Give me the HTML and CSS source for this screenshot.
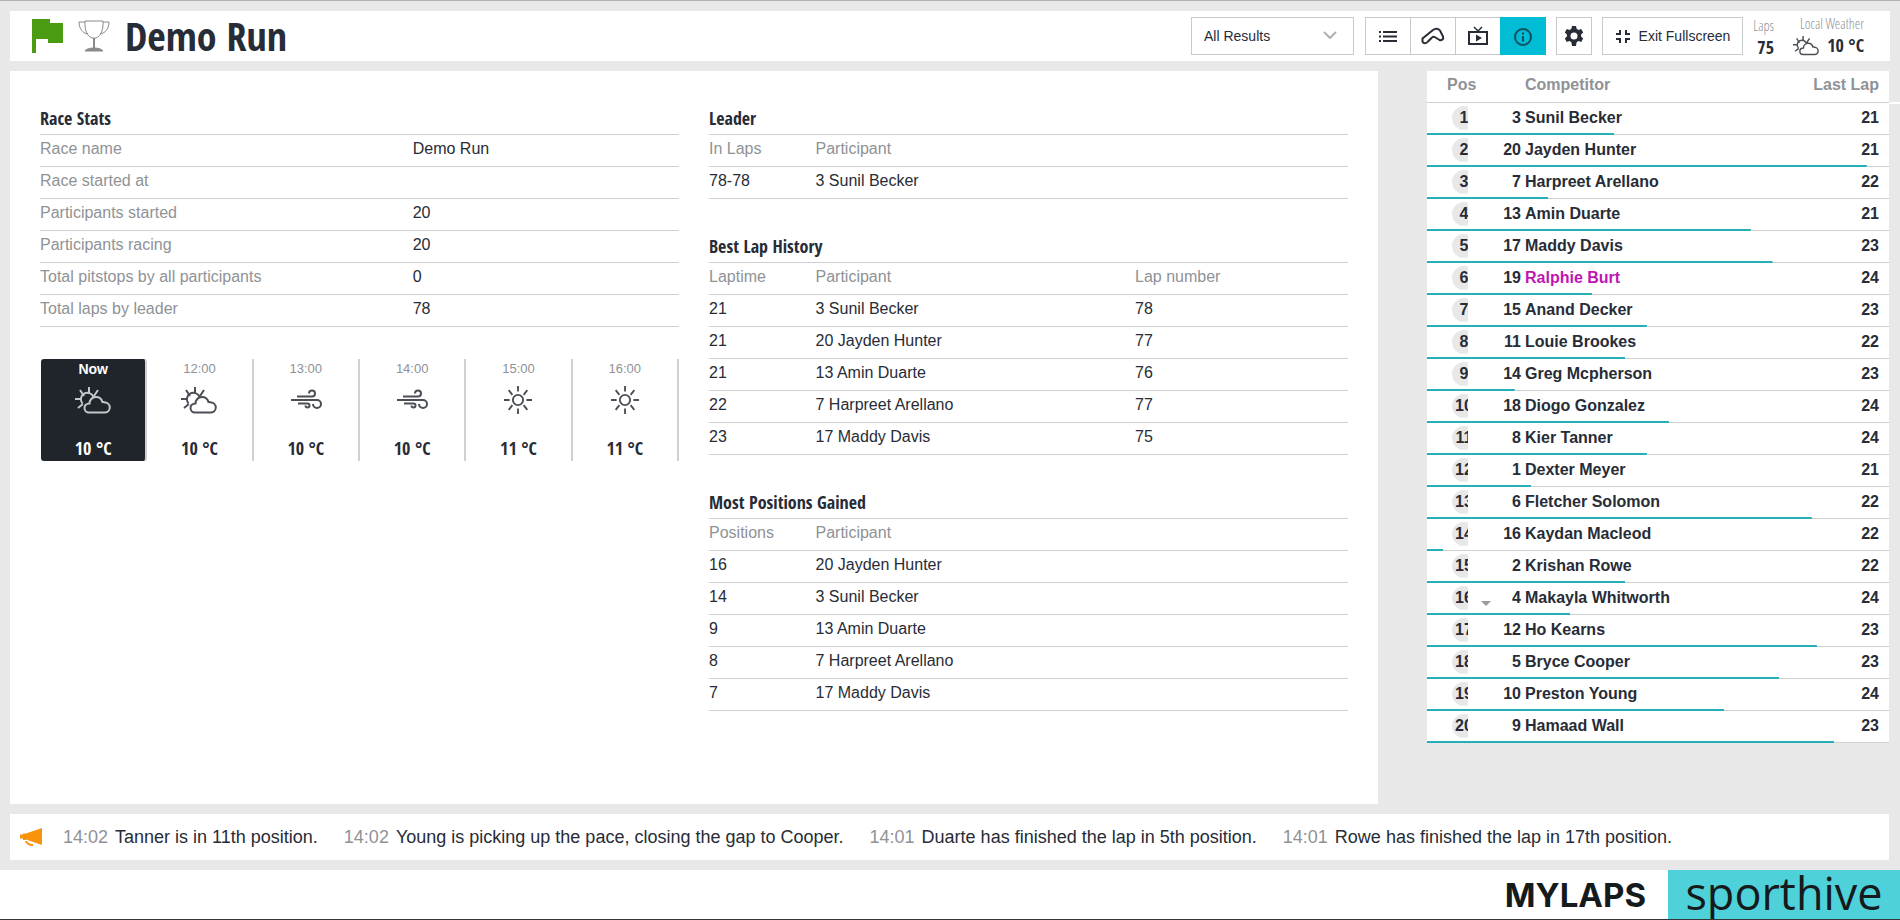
FILE: index.html
```html
<!DOCTYPE html>
<html lang="en">
<head>
    <meta charset="UTF-8">
    <meta name="viewport" content="width=device-width, initial-scale=1.0">
    <title>Demo Run</title>
    <link rel="stylesheet" href="styles.css">
</head>
<body>
    <!-- shared icons -->
    <svg class="sprite" aria-hidden="true">
        <symbol id="partly" viewBox="0 0 36 28">
            <path d="M14 1v6M5 4l4 6M23 4l-4 6M0 13h6M3 22l5-4M7.500 17.500a6.500 6.500 0 1 1 11-6.500M13 26.500h16.500a5 5 0 0 0 .5-10 3 3 0 0 0-2.500-.5c-1-3.500-3.500-5-6.500-5-4 0-6.500 3-6.500 6.500-3 0-5 2-5 4.500s2 4.500 4.500 4.500z"/>
        </symbol>
        <symbol id="wind" viewBox="-3 -4 36 28">
            <path d="M6 6.500h15a3 3 0 1 0-3-3M0 10h26a4 4 0 1 1-4 4M7 13.500h9.500a2 2 0 1 1-2 2"/>
        </symbol>
        <symbol id="sun" viewBox="-3 0 36 30">
            <circle cx="15" cy="15" r="5.500"/>
            <path d="M15 0v6M15 24v6M0 15h6M24 15h6M5 4.500l4 5M25 4.500l-4 5M5 25.500l4-5M25 25.500l-4-5"/>
        </symbol>
    </svg>

    <header class="topbar">
        <svg class="flag" viewBox="0 0 32 34" aria-label="Green flag"><path d="M0 0h18v4h13v20H16v-4H4v14H0z"/></svg>
        <svg class="trophy" viewBox="0 0 32 32" aria-label="Trophy">
            <path d="M7 1h18c.5 9-2 15-7 17h-4C9 16 6.500 10 7 1zM7 2H1c0 6 3 11 9 12M25 2h6c0 6-3 11-9 12"/>
            <path d="M16 18v10" stroke-width="2"/>
            <path class="base" d="M7 31c1-2 5-3 9-3s8 1 9 3z"/>
        </svg>
        <h1>Demo Run</h1>

        <div class="results">
            <select aria-label="Results filter">
                <option>All Results</option>
            </select>
            <svg viewBox="0 0 14 8"><path d="M1 1l6 6 6-6"/></svg>
        </div>
        <div class="views">
            <button type="button" aria-label="List">
                <svg viewBox="0 0 24 20"><path d="M7 6h14M7 10.500h14M7 15h14M3 6h2M3 10.500h2M3 15h2"/></svg>
            </button>
            <button type="button" aria-label="Track">
                <svg viewBox="0 -1 24 20"><path d="M1.500 14.500v-3L12 3c2.500-2 5.500-1.500 7 .5l3 6c1 2.500-1.500 4.500-3.500 3.500l-4-2.500c-1.500-1-3-.8-4 .5L7 14.500c-1.500 2-5 2.500-5.500 0z"/></svg>
            </button>
            <button type="button" aria-label="Video">
                <svg viewBox="0 0 24 20"><path d="M3 6h18v12H3z"/><path d="M8 1l4 4 4-4" stroke-width="1.500"/><path class="solid" d="M10 8.500v7l6-3.500z"/></svg>
            </button>
            <button type="button" class="active" aria-label="Info">
                <svg viewBox="0 0 20 20"><circle cx="10" cy="11" r="8"/><path d="M10 10v5.500M10 6.500v2"/></svg>
            </button>
        </div>
        <button type="button" class="settings" aria-label="Settings">
            <svg viewBox="0 0 20 20"><path fill-rule="evenodd" d="M8 0h4l.6 2.800 1.900 1.100 2.700-.9 2 3.500-2.100 1.900v2.200l2.100 1.900-2 3.500-2.700-.9-1.900 1.100L12 20H8l-.6-3.800-1.900-1.100-2.700.9-2-3.500 2.100-1.900V8.400L.8 6.500l2-3.500 2.700.9 1.900-1.100zM10 6.500a3.500 3.500 0 1 0 0 7 3.500 3.500 0 0 0 0-7z"/></svg>
        </button>
        <button type="button" class="fullscreen">
            <svg viewBox="0 0 16 16"><path d="M1 6h4V2M15 6h-4V2M1 11h4v4M15 11h-4v4"/></svg>
            Exit Fullscreen
        </button>
        <div class="laps">
            <span class="caption">Laps</span>
            <strong>75</strong>
        </div>
        <div class="local-weather">
            <span class="caption">Local Weather</span>
            <strong><svg><use href="#partly"/></svg>10 °C</strong>
        </div>
    </header>

    <div class="content">
        <main class="stats">
            <div class="column">
                <section>
                    <h2>Race Stats</h2>
                    <table class="race">
                        <tr><th>Race name</th><td>Demo Run</td></tr>
                        <tr><th>Race started at</th><td></td></tr>
                        <tr><th>Participants started</th><td>20</td></tr>
                        <tr><th>Participants racing</th><td>20</td></tr>
                        <tr><th>Total pitstops by all participants</th><td>0</td></tr>
                        <tr><th>Total laps by leader</th><td>78</td></tr>
                    </table>
                </section>
                <section class="forecast">
                    <div class="hour now"><span>Now</span><svg><use href="#partly"/></svg><strong>10 °C</strong></div>
                    <div class="hour"><span>12:00</span><svg><use href="#partly"/></svg><strong>10 °C</strong></div>
                    <div class="hour"><span>13:00</span><svg><use href="#wind"/></svg><strong>10 °C</strong></div>
                    <div class="hour"><span>14:00</span><svg><use href="#wind"/></svg><strong>10 °C</strong></div>
                    <div class="hour"><span>15:00</span><svg><use href="#sun"/></svg><strong>11 °C</strong></div>
                    <div class="hour"><span>16:00</span><svg><use href="#sun"/></svg><strong>11 °C</strong></div>
                </section>
            </div>

            <div class="column">
                <section>
                    <h2>Leader</h2>
                    <table class="laps-table">
                        <tr><th>In Laps</th><th>Participant</th><th></th></tr>
                        <tr><td>78-78</td><td>3 Sunil Becker</td><td></td></tr>
                    </table>
                </section>
                <section>
                    <h2>Best Lap History</h2>
                    <table class="laps-table">
                        <tr><th>Laptime</th><th>Participant</th><th>Lap number</th></tr>
                        <tr><td>21</td><td>3 Sunil Becker</td><td>78</td></tr>
                        <tr><td>21</td><td>20 Jayden Hunter</td><td>77</td></tr>
                        <tr><td>21</td><td>13 Amin Duarte</td><td>76</td></tr>
                        <tr><td>22</td><td>7 Harpreet Arellano</td><td>77</td></tr>
                        <tr><td>23</td><td>17 Maddy Davis</td><td>75</td></tr>
                    </table>
                </section>
                <section>
                    <h2>Most Positions Gained</h2>
                    <table class="laps-table">
                        <tr><th>Positions</th><th>Participant</th><th></th></tr>
                        <tr><td>16</td><td>20 Jayden Hunter</td><td></td></tr>
                        <tr><td>14</td><td>3 Sunil Becker</td><td></td></tr>
                        <tr><td>9</td><td>13 Amin Duarte</td><td></td></tr>
                        <tr><td>8</td><td>7 Harpreet Arellano</td><td></td></tr>
                        <tr><td>7</td><td>17 Maddy Davis</td><td></td></tr>
                    </table>
                </section>
            </div>
        </main>

        <aside class="board">
            <table>
                <thead>
                    <tr><th class="pos">Pos</th><th class="change"></th><th class="num"></th><th>Competitor</th><th class="last">Last Lap</th></tr>
                </thead>
                <tbody>
                    <tr style="--progress: 40.5%"><td class="pos"><div><span>1</span></div></td><td></td><td class="num">3</td><td>Sunil Becker</td><td class="last">21</td></tr>
                    <tr style="--progress: 95.2%"><td class="pos"><div><span>2</span></div></td><td></td><td class="num">20</td><td>Jayden Hunter</td><td class="last">21</td></tr>
                    <tr style="--progress: 26.2%"><td class="pos"><div><span>3</span></div></td><td></td><td class="num">7</td><td>Harpreet Arellano</td><td class="last">22</td></tr>
                    <tr style="--progress: 70.1%"><td class="pos"><div><span>4</span></div></td><td></td><td class="num">13</td><td>Amin Duarte</td><td class="last">21</td></tr>
                    <tr style="--progress: 74.8%"><td class="pos"><div><span>5</span></div></td><td></td><td class="num">17</td><td>Maddy Davis</td><td class="last">23</td></tr>
                    <tr style="--progress: 35.7%"><td class="pos"><div><span>6</span></div></td><td></td><td class="num">19</td><td class="best">Ralphie Burt</td><td class="last">24</td></tr>
                    <tr style="--progress: 47.6%"><td class="pos"><div><span>7</span></div></td><td></td><td class="num">15</td><td>Anand Decker</td><td class="last">23</td></tr>
                    <tr style="--progress: 42.9%"><td class="pos"><div><span>8</span></div></td><td></td><td class="num">11</td><td>Louie Brookes</td><td class="last">22</td></tr>
                    <tr style="--progress: 19%"><td class="pos"><div><span>9</span></div></td><td></td><td class="num">14</td><td>Greg Mcpherson</td><td class="last">23</td></tr>
                    <tr style="--progress: 52.4%"><td class="pos"><div><span>10</span></div></td><td></td><td class="num">18</td><td>Diogo Gonzalez</td><td class="last">24</td></tr>
                    <tr style="--progress: 47.6%"><td class="pos"><div><span>11</span></div></td><td></td><td class="num">8</td><td>Kier Tanner</td><td class="last">24</td></tr>
                    <tr style="--progress: 22.5%"><td class="pos"><div><span>12</span></div></td><td></td><td class="num">1</td><td>Dexter Meyer</td><td class="last">21</td></tr>
                    <tr style="--progress: 83.3%"><td class="pos"><div><span>13</span></div></td><td></td><td class="num">6</td><td>Fletcher Solomon</td><td class="last">22</td></tr>
                    <tr style="--progress: 3.5%"><td class="pos"><div><span>14</span></div></td><td></td><td class="num">16</td><td>Kaydan Macleod</td><td class="last">22</td></tr>
                    <tr style="--progress: 42.9%"><td class="pos"><div><span>15</span></div></td><td></td><td class="num">2</td><td>Krishan Rowe</td><td class="last">22</td></tr>
                    <tr style="--progress: 31%"><td class="pos"><div><span>16</span></div></td><td class="change"><i class="down"></i></td><td class="num">4</td><td>Makayla Whitworth</td><td class="last">24</td></tr>
                    <tr style="--progress: 84.4%"><td class="pos"><div><span>17</span></div></td><td></td><td class="num">12</td><td>Ho Kearns</td><td class="last">23</td></tr>
                    <tr style="--progress: 76.2%"><td class="pos"><div><span>18</span></div></td><td></td><td class="num">5</td><td>Bryce Cooper</td><td class="last">23</td></tr>
                    <tr style="--progress: 64.3%"><td class="pos"><div><span>19</span></div></td><td></td><td class="num">10</td><td>Preston Young</td><td class="last">24</td></tr>
                    <tr style="--progress: 88.1%"><td class="pos"><div><span>20</span></div></td><td></td><td class="num">9</td><td>Hamaad Wall</td><td class="last">23</td></tr>
                </tbody>
            </table>
        </aside>
    </div>

    <section class="ticker">
        <svg viewBox="0 0 22 18"><path d="M22 0v17L6 11.500V12H3v-1.500H0v-4h3V5.500h3z"/><path class="handle" d="M6 13c1 3 3 4 7 4"/></svg>
        <p><time>14:02</time>Tanner is in 11th position.</p>
        <p><time>14:02</time>Young is picking up the pace, closing the gap to Cooper.</p>
        <p><time>14:01</time>Duarte has finished the lap in 5th position.</p>
        <p><time>14:01</time>Rowe has finished the lap in 17th position.</p>
    </section>

    <footer class="brands">
        <span class="mylaps">MYLAPS</span>
        <span class="sporthive">sporthive</span>
    </footer>
</body>
</html>
```
FILE: styles.css
```css
* {
    box-sizing: border-box;
}
body {
    margin: 0;
    min-height: 100vh;
    display: flex;
    flex-direction: column;
    gap: 10px;
    padding-top: 10px;
    border-top: 1px solid #b4b2b4;
    border-bottom: 1px solid #33363a;
    background-color: #e8e8e8;
    color: #272c36;
    font-family: "Liberation Sans", Arial, sans-serif;
    font-size: 16px;
}
h1, h2, p {
    margin: 0;
}
h1, h2, .laps, .local-weather, .hour strong {
    font-family: "Open Sans Condensed", "Liberation Sans Narrow", "Open Sans", sans-serif;
}
svg {
    fill: none;
    stroke: #4b4f55;
    stroke-width: 2;
}
.sprite {
    position: absolute;
    width: 0;
    height: 0;
}

/* Top bar */
.topbar {
    display: flex;
    align-items: center;
    height: 50px;
    margin: 0 10px;
    padding: 0 26px 0 22px;
    background-color: #fff;
}
.flag {
    width: 32px;
    height: 34px;
    fill: #4b9b13;
    stroke: none;
}
.trophy {
    width: 32px;
    height: 32px;
    margin-left: 14px;
    stroke: #8a8a8a;
    stroke-width: 1;
}
.trophy .base {
    fill: #8a8a8a;
}
h1 {
    flex: 1;
    margin-left: 15px;
    font-size: 40px;
    line-height: 50px;
}
.topbar button, .topbar select {
    height: 38px;
    border: 1px solid #c9cacb;
    border-radius: 0;
    background-color: #fff;
    color: #272c36;
    font-family: inherit;
    font-size: 14px;
}
.topbar button {
    display: flex;
    align-items: center;
    justify-content: center;
    padding: 0;
}
.topbar button svg {
    width: 24px;
    height: 20px;
    stroke: #272c36;
}
.results {
    position: relative;
    width: 163px;
}
.topbar select {
    width: 100%;
    padding: 0 12px;
    appearance: none;
}
.results svg {
    position: absolute;
    right: 17px;
    top: 14px;
    width: 14px;
    height: 8px;
    stroke: #b0b0b0;
    pointer-events: none;
}
.views {
    display: flex;
    margin-left: 11px;
}
.views button {
    width: 46px;
    margin-right: -1px;
}
.views .solid {
    fill: #272c36;
    stroke: none;
}
.topbar .settings svg {
    fill: #272c36;
    stroke: none;
}
.topbar .views .active {
    border-color: #00bcd4;
    background-color: #00bcd4;
}
.topbar .views .active svg {
    stroke: #14505f;
}
.settings {
    width: 36px;
    margin-left: 11px;
}
.fullscreen {
    width: 141px;
    margin-left: 10px;
    gap: 8px;
}
.topbar .fullscreen svg {
    width: 16px;
    height: 16px;
}
.laps, .local-weather {
    display: flex;
    flex-direction: column;
    align-items: flex-end;
    width: 31px;
    line-height: 22px;
    white-space: nowrap;
}
.local-weather {
    width: 90px;
    padding-bottom: 4px;
}
.caption {
    color: #8f9296;
    font-family: "Open Sans Condensed Light", "Liberation Sans Narrow", "Liberation Sans", sans-serif;
    font-size: 14px;
    font-weight: 300;
}
.laps strong, .local-weather strong {
    display: flex;
    gap: 8px;
    font-size: 18px;
    line-height: 20px;
}
.local-weather svg {
    width: 26px;
    height: 21px;
}

/* Middle */
.content {
    flex: 1;
    display: grid;
    grid-template-columns: 72vw 1fr;
    gap: 49px;
    padding: 0 11px 0 10px;
}
.stats {
    display: grid;
    grid-template-columns: 1fr 1fr;
    gap: 30px;
    padding: 32px 30px;
    background-color: #fff;
}
.column {
    display: flex;
    flex-direction: column;
    gap: 32px;
}
h2 {
    height: 32px;
    border-bottom: 1px solid #cfd0d1;
    font-size: 18px;
    line-height: 30px;
}
table {
    width: 100%;
    border-spacing: 0;
    table-layout: fixed;
}
th, td {
    height: 32px;
    padding: 0 0 3px;
    line-height: 28px;
    text-align: left;
    white-space: nowrap;
}
.stats th, .stats td {
    border-bottom: 1px solid #cfd0d1;
}
.stats th {
    color: #8f9296;
    font-weight: normal;
}
.race th {
    width: 58.33%;
}
.laps-table th:first-child {
    width: 16.67%;
}
.laps-table th:last-child {
    width: 33.33%;
}

/* Forecast */
.forecast {
    display: flex;
    padding-left: 1px;
}
.hour {
    flex: 1;
    display: flex;
    flex-direction: column;
    align-items: center;
    justify-content: space-between;
    height: 102px;
    padding-bottom: 3px;
    border-right: 2px solid #cfd0d1;
    color: #8f9296;
    font-size: 13px;
    line-height: 20px;
}
.hour strong {
    color: #272c36;
    font-size: 18px;
}
.hour svg {
    width: 36px;
    height: 28px;
    margin-bottom: 18px;
}
.now {
    border-radius: 3px;
    background-color: #20252b;
    color: #fff;
    font-size: 14px;
    font-weight: bold;
}
.now strong {
    color: #fff;
}
.now svg {
    stroke: #c4c6c8;
}

/* Leaderboard */
.board {
    position: relative;
    font-weight: bold;
}
.board::after {
    content: "";
    position: absolute;
    top: 31px;
    right: -11px;
    width: 11px;
    height: 2px;
    background-color: #fff;
}
.board table {
    background-color: #fff;
}
.board tr {
    background: linear-gradient(#25b0b8, #25b0b8) no-repeat left bottom / var(--progress, 0) 2px,
                linear-gradient(#cfd0d1, #cfd0d1) no-repeat left bottom / 100% 1px;
}
.board thead {
    color: #8f9296;
}
.board thead th {
    padding-bottom: 4px;
}
.board .pos {
    width: 50px;
    padding-left: 20px;
}
.board td.pos {
    padding-left: 25px;
}
/* the badge is wider than its cell and gets cut off */
.pos div {
    width: 16px;
    height: 24px;
    overflow: hidden;
}
.pos span {
    display: block;
    width: 24px;
    border-radius: 50%;
    background-color: #e8e8e8;
    line-height: 24px;
    text-align: center;
}
.board .change {
    width: 20px;
}
.down {
    display: block;
    width: 0;
    margin: 12px 0 0 4px;
    border: 5px solid transparent;
    border-top-color: #9a9a9a;
    border-bottom: 0;
}
.board .num {
    width: 28px;
    padding-right: 4px;
    text-align: right;
}
.board .last {
    width: 100px;
    padding-right: 10px;
    text-align: right;
}
.best {
    color: #c015b4;
}

/* Ticker */
.ticker {
    display: flex;
    align-items: center;
    gap: 26px;
    height: 46px;
    margin: 0 11px 0 10px;
    padding-left: 10px;
    background-color: #fff;
    font-size: 18px;
    white-space: nowrap;
}
.ticker svg {
    width: 22px;
    height: 18px;
    margin-right: -5px;
    fill: #f9930a;
    stroke: none;
}
.ticker .handle {
    fill: none;
    stroke: #f9930a;
}
.ticker time {
    margin-right: 7px;
    color: #8f9296;
}

/* Footer */
.brands {
    display: flex;
    align-items: center;
    justify-content: flex-end;
    gap: 22px;
    height: 49px;
    background-color: #fff;
    color: #151a1c;
}
.mylaps {
    font-family: Inter, sans-serif;
    font-size: 33px;
    font-weight: 700;
}
.sporthive {
    width: 232px;
    height: 49px;
    background-color: #4fd1d9;
    font-family: "Open Sans", sans-serif;
    font-size: 45px;
    line-height: 46px;
    text-align: center;
}
```
